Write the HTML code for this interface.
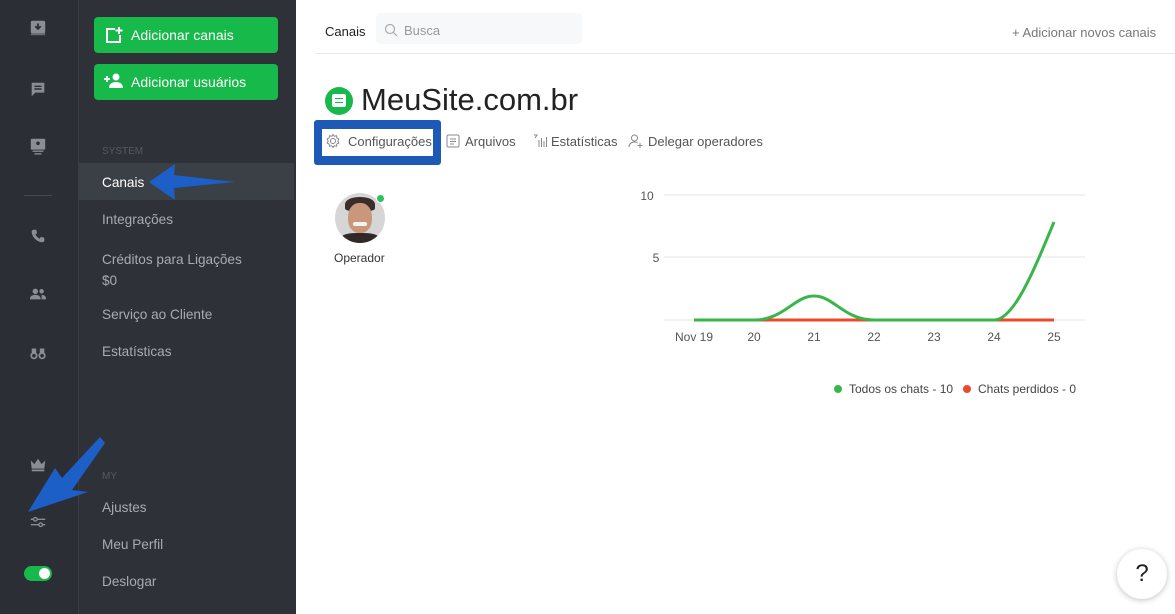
<!DOCTYPE html>
<html><head><meta charset="utf-8"><style>
*{margin:0;padding:0;box-sizing:border-box}
body{width:1175px;height:614px;overflow:hidden;background:#fff;font-family:"Liberation Sans",sans-serif;position:relative}
.s1{position:absolute;left:0;top:0;width:79px;height:614px;background:#2b2f35;border-right:1px solid #3a3e44}
.s2{position:absolute;left:79px;top:0;width:217px;height:614px;background:#2e3238}
.btn{position:absolute;left:15px;width:184px;height:36px;background:#17b94a;border-radius:4px;color:#fff;font-size:14px;line-height:36px;padding-left:37px}
.it{position:absolute;left:23px;color:#a8acb2;font-size:13.6px}
.hd{position:absolute;left:23px;color:#555a61;font-size:10px}
.ic{position:absolute;left:29px;width:18px;height:18px;fill:#8a8e94}
.t{position:absolute;font-size:13px;color:#555}
.ax{position:absolute;font-size:12px;color:#555;text-align:center;width:50px}
</style></head><body>
<div class="s1">
<svg class="ic" style="top:19px" viewBox="0 0 20 20"><rect x="2" y="2" width="16" height="14" rx="2"/><path d="M10 5v6M7 8l3 3 3-3" stroke="#2b2f35" stroke-width="2" fill="none"/><rect x="2" y="16" width="16" height="2" fill="#6a6e74"/></svg>
<svg class="ic" style="top:80px" viewBox="0 0 20 20"><path d="M3 3h14v11H7l-4 4z"/><path d="M6 7h8M6 10h8" stroke="#2b2f35" stroke-width="1.6"/></svg>
<svg class="ic" style="top:137px" viewBox="0 0 20 20"><rect x="2" y="2" width="16" height="12" rx="1"/><circle cx="10" cy="7" r="2" fill="#2b2f35"/><rect x="4" y="15" width="12" height="1.5"/><rect x="6" y="18" width="8" height="1.5"/></svg>
<div style="position:absolute;left:24px;top:195px;width:28px;height:1px;background:#454950"></div>
<svg class="ic" style="top:227px" viewBox="0 0 20 20"><path d="M5 3l3 0 1 4-2 1c1 2 3 4 5 5l1-2 4 1v3c0 1-1 2-2 2C9 17 3 11 3 5c0-1 1-2 2-2z"/></svg>
<svg class="ic" style="top:285px" viewBox="0 0 20 20"><circle cx="7" cy="7" r="3"/><circle cx="14" cy="7" r="2.5"/><path d="M1 16c0-4 3-5 6-5s6 1 6 5zM14 11c3 0 5 1 5 5h-5z"/></svg>
<svg class="ic" style="top:344px" viewBox="0 0 20 20"><circle cx="5.5" cy="13" r="4"/><circle cx="14.5" cy="13" r="4"/><rect x="3" y="5" width="5" height="7"/><rect x="12" y="5" width="5" height="7"/><circle cx="5.5" cy="13" r="2" fill="#2b2f35"/><circle cx="14.5" cy="13" r="2" fill="#2b2f35"/></svg>
<svg class="ic" style="top:456px" viewBox="0 0 20 20"><path d="M2 5l4 4 4-6 4 6 4-4-1 9H3z"/><rect x="3" y="15" width="14" height="2"/></svg>
<svg class="ic" style="top:513px" viewBox="0 0 20 20" fill="none" stroke="#8a8e94" stroke-width="1.5"><path d="M2 7h16M2 13h16"/><circle cx="7" cy="7" r="2" fill="#2b2f35"/><circle cx="13" cy="13" r="2" fill="#2b2f35"/></svg>
<div style="position:absolute;left:24px;top:566px;width:28px;height:15px;border-radius:8px;background:#17b94a"><div style="position:absolute;right:2px;top:2px;width:11px;height:11px;border-radius:50%;background:#fff"></div></div>
</div>
<div class="s2">
<div class="btn" style="top:17px">Adicionar canais</div>
<svg style="position:absolute;left:26px;top:26px" width="18" height="18" viewBox="0 0 18 18" fill="none" stroke="#fff" stroke-width="2"><path d="M10 3H2v13h13V9M14 1v7M10.5 4.5h7"/></svg>
<div class="btn" style="top:64px">Adicionar usuários</div>
<svg style="position:absolute;left:25px;top:73px" width="20" height="16" viewBox="0 0 20 16" fill="#fff"><circle cx="12" cy="4" r="3.5"/><path d="M5 15c0-4 3-6 7-6s7 2 7 6z"/><path d="M0 6h6M3 3v6" stroke="#fff" stroke-width="1.8"/></svg>
<div class="hd" style="top:146px">SYSTEM</div>
<div style="position:absolute;left:0;top:163px;width:215px;height:37px;background:#3b3f46"></div>
<div class="it" style="top:175px;color:#fff">Canais</div>
<svg style="position:absolute;left:68px;top:160px" width="90" height="44" viewBox="0 0 90 44"><path d="M2 22L28 4 27 15 88 22 27 28 28 40z" fill="#1c5fc7"/></svg>
<div class="it" style="top:212px">Integrações</div>
<div class="it" style="top:249px;line-height:21px">Créditos para Ligações<br>$0</div>
<div class="it" style="top:307px">Serviço ao Cliente</div>
<div class="it" style="top:344px">Estatísticas</div>
<div class="hd" style="top:471px">MY</div>
<div class="it" style="top:500px">Ajustes</div>
<div class="it" style="top:537px">Meu Perfil</div>
<div class="it" style="top:574px">Deslogar</div>
</div>
<svg style="position:absolute;left:0;top:430px" width="120" height="100" viewBox="0 430 120 100"><path d="M28 512L55 468 62 478 100 437 105 443 72 490 88 492z" fill="#1c5fc7"/></svg>
<div style="position:absolute;left:325px;top:24px;font-size:13px;color:#222">Canais</div>
<div style="position:absolute;left:376px;top:13px;width:206px;height:31px;background:#f7f8f9;border-radius:4px"></div>
<svg style="position:absolute;left:384px;top:23px" width="14" height="14" viewBox="0 0 14 14" fill="none" stroke="#aaa" stroke-width="1.2"><circle cx="6" cy="6" r="4.5"/><path d="M9.5 9.5l3.5 3.5"/></svg>
<div style="position:absolute;left:404px;top:23px;font-size:13px;color:#999">Busca</div>
<div style="position:absolute;left:1012px;top:25px;font-size:13px;color:#777">+ Adicionar novos canais</div>
<div style="position:absolute;left:316px;top:53px;width:859px;height:1px;background:#e8e8e8"></div>
<div style="position:absolute;left:325px;top:87px;width:28px;height:28px;border-radius:50%;background:#17b94a"></div>
<div style="position:absolute;left:332px;top:94px;width:14px;height:13px;background:#fff;border-radius:2px"><div style="margin:4px 3px 0;height:1px;background:#17b94a"></div><div style="margin:3px 3px 0;height:1px;background:#17b94a"></div></div>
<div style="position:absolute;left:361px;top:82px;font-size:31px;color:#222">MeuSite.com.br</div>
<div style="position:absolute;left:314px;top:120px;width:127px;height:45px;background:#1d5ab8;border-radius:3px"></div>
<div style="position:absolute;left:322px;top:129px;width:111px;height:27px;background:#fff"></div>
<svg style="position:absolute;left:325px;top:133px" width="16" height="16" viewBox="0 0 16 16" fill="none" stroke="#888" stroke-width="1"><circle cx="8" cy="8" r="2.5"/><path d="M8 1.5l1.3 1.8 2.2-.6.3 2.2 2 1-.9 2.1.9 2.1-2 1-.3 2.2-2.2-.6L8 14.5l-1.3-1.8-2.2.6-.3-2.2-2-1 .9-2.1-.9-2.1 2-1 .3-2.2 2.2.6z"/></svg>
<div class="t" style="left:348px;top:134px">Configurações</div>
<svg style="position:absolute;left:446px;top:134px" width="14" height="14" viewBox="0 0 14 14" fill="none" stroke="#888"><rect x="1" y="1" width="12" height="12" rx="1.5"/><path d="M4 5h6M4 7.5h6M4 10h4"/></svg>
<div class="t" style="left:465px;top:134px">Arquivos</div>
<svg style="position:absolute;left:533px;top:134px" width="14" height="14" viewBox="0 0 14 14" fill="none" stroke="#888"><path d="M1 1h3l-2 3M6 6v7M8.5 4v9M11 7v6M13.5 3v10"/></svg>
<div class="t" style="left:551px;top:134px">Estatísticas</div>
<svg style="position:absolute;left:628px;top:133px" width="16" height="16" viewBox="0 0 16 16" fill="none" stroke="#888"><circle cx="6.5" cy="5" r="3"/><path d="M1 14c0-3 2.5-5 5.5-5 1.5 0 2.5.4 3.3 1M12 10v5M9.5 12.5h5"/></svg>
<div class="t" style="left:648px;top:134px">Delegar operadores</div>
<div style="position:absolute;left:335px;top:193px;width:50px;height:50px;border-radius:50%;overflow:hidden;background:#d6d6d6">
<div style="position:absolute;left:10px;top:4px;width:30px;height:14px;border-radius:50% 50% 20% 20%;background:#3a2e2a"></div>
<div style="position:absolute;left:13px;top:10px;width:24px;height:30px;border-radius:45%;background:#c8977c"></div>
<div style="position:absolute;left:18px;top:29px;width:14px;height:4px;border-radius:2px;background:#f2f2f2"></div>
<div style="position:absolute;left:5px;top:40px;width:40px;height:14px;border-radius:40% 40% 0 0;background:#2f2a28"></div>
</div>
<div style="position:absolute;left:376px;top:194px;width:9px;height:9px;border-radius:50%;background:#2cc15a;border:1px solid #fff"></div>
<div style="position:absolute;left:334px;top:251px;font-size:12px;color:#333">Operador</div>
<svg style="position:absolute;left:640px;top:180px" width="460" height="230" viewBox="640 180 460 230">
<path d="M664 195H1085M664 257H1085M664 320H1085" stroke="#e6e6e6"/>
<path d="M754 320H1054" stroke="#ea4a2a" stroke-width="3"/>
<path d="M694 320H754C784 320 794 296 814 296C834 296 844 320 874 320H994C1014 320 1034 270 1054 222" stroke="#3ab54a" stroke-width="3" fill="none"/>
</svg>
<div class="ax" style="left:627px;top:189px;width:40px">10</div>
<div class="ax" style="left:636px;top:251px;width:40px">5</div>
<div class="ax" style="left:669px;top:330px">Nov 19</div>
<div class="ax" style="left:729px;top:330px">20</div>
<div class="ax" style="left:789px;top:330px">21</div>
<div class="ax" style="left:849px;top:330px">22</div>
<div class="ax" style="left:909px;top:330px">23</div>
<div class="ax" style="left:969px;top:330px">24</div>
<div class="ax" style="left:1029px;top:330px">25</div>
<div style="position:absolute;left:834px;top:385px;width:8px;height:8px;border-radius:50%;background:#3ab54a"></div>
<div style="position:absolute;left:849px;top:382px;font-size:12px;color:#444">Todos os chats - 10</div>
<div style="position:absolute;left:963px;top:385px;width:8px;height:8px;border-radius:50%;background:#ea4a2a"></div>
<div style="position:absolute;left:978px;top:382px;font-size:12px;color:#444">Chats perdidos - 0</div>
<div style="position:absolute;left:1117px;top:549px;width:50px;height:50px;border-radius:50%;background:#fff;box-shadow:0 1px 6px rgba(0,0,0,.25);text-align:center;line-height:50px;font-size:24px;color:#222">?</div>
</body></html>
